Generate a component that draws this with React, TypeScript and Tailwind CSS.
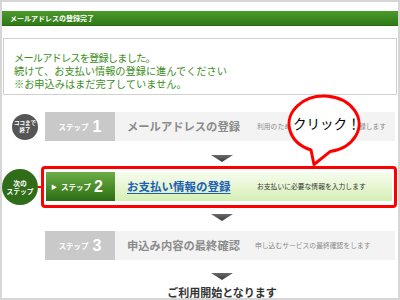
import React from "react";

const Arrow = ({ mt }: { mt: string }) => (
  <div className={`flex justify-center pl-[45px] pr-[1px] ${mt}`}>
    <svg width="22" height="7" viewBox="0 0 22 7">
      <defs>
        <linearGradient id="ag" x1="0" y1="0" x2="0" y2="1">
          <stop offset="0" stopColor="#6a6a6a" />
          <stop offset="1" stopColor="#3c3c3c" />
        </linearGradient>
      </defs>
      <polygon points="0,0 22,0 11,7" fill="url(#ag)" />
    </svg>
  </div>
);

const GrayStep = ({ n, title, desc, descLeft }: { n: string; title: string; desc: string; descLeft: string }) => (
  <div className="flex h-[29px] flex-1">
    <div className="w-[70px] h-full bg-[#c9c9c9] flex items-center justify-center gap-[4px] text-white font-bold">
      <span className="text-[7.5px] leading-none">ステップ</span>
      <span className="text-[16px] leading-none font-['Liberation_Sans',sans-serif] font-bold">{n}</span>
    </div>
    <div className="flex-1 h-full bg-[#f3f3f3] flex items-center pl-[12px]">
      <span className={`${descLeft} shrink-0 text-[11.3px] font-bold text-[#8c8c8c] whitespace-nowrap`}>{title}</span>
      <span className="text-[6.8px] text-[#8a8a8a] whitespace-nowrap">{desc}</span>
    </div>
  </div>
);

export default function App() {
  return (
    <div className="relative w-[400px] h-[300px] overflow-hidden bg-white border-2 border-[#d6d6d6] font-['Noto_Sans_CJK_JP','Noto_Sans_CJK_SC',sans-serif]">
      {/* header */}
      <div className="mt-[9px] h-[15px] bg-gradient-to-b from-[#4c9a2c] to-[#2f7a15] border-b border-[#286a10] flex items-center pl-[8px]">
        <span className="text-[7px] font-bold text-white leading-none">メールアドレスの登録完了</span>
      </div>
      {/* message */}
      <div className="mt-[12px] ml-[1px] mr-[1px] h-[57px] border border-[#d0d0d0] pt-[12px] pl-[10px] text-[10.2px] leading-[13px] text-[#3c8e1c] whitespace-nowrap">
        <div className="tracking-[-0.8px]">メールアドレスを登録しました。</div>
        <div>続けて、お支払い情報の登録に進んでください</div>
        <div>※お申込みはまだ完了していません。</div>
      </div>

      {/* step 1 */}
      <div className="mt-[17px] flex items-center pr-[3px]">
        <div className="ml-[10px] mr-[7px] w-[26px] h-[26px] rounded-full bg-[#555555] flex flex-col items-center justify-center text-white font-bold text-[5.5px] leading-[6.5px]">
          <span>ココまで</span>
          <span>終了</span>
        </div>
        <GrayStep n="1" title="メールアドレスの登録" desc="利用のためのメールアドレスを登録します" descLeft="w-[130px]" />
      </div>

      <Arrow mt="mt-[14px]" />

      {/* step 2 */}
      <div className="mt-[4px] flex items-center pr-[1px]">
        <div className="w-[36px] h-[36px] rounded-full bg-[#2f6d18] flex flex-col items-center justify-center text-white font-bold text-[6.8px] leading-[8.5px]">
          <span>次の</span>
          <span>ステップ</span>
        </div>
        <div className="w-[3px] h-[2px] bg-[#ff0000]" />
        <div className="flex-1 h-[42px] border-[3px] border-[#ff0000] rounded-[4px] pt-[3px] pl-[2px] pr-[2px]">
          <div className="flex h-[29px]">
            <div className="w-[69px] h-full bg-gradient-to-b from-[#6cae48] via-[#4b8f2a] to-[#2c6c14] flex items-center pl-[5px] text-white font-bold">
              <span className="text-[6px] leading-none mr-[4px]">▶</span>
              <span className="text-[7.5px] leading-none mr-[3px]">ステップ</span>
              <span className="text-[16px] leading-none font-['Liberation_Sans',sans-serif] font-bold">2</span>
            </div>
            <div className="flex-1 h-full bg-gradient-to-b from-[#f6fcee] to-[#d5efb5] flex items-center pl-[12px]">
              <span className="w-[130px] shrink-0 text-[11.5px] font-bold text-[#1f5fb5] underline underline-offset-2 whitespace-nowrap">お支払い情報の登録</span>
              <span className="text-[6.8px] text-[#333333] whitespace-nowrap">お支払いに必要な情報を入力します</span>
            </div>
          </div>
        </div>
      </div>

      <Arrow mt="mt-[6px]" />

      {/* step 3 */}
      <div className="mt-[10px] flex items-center pl-[43px] pr-[3px]">
        <GrayStep n="3" title="申込み内容の最終確認" desc="申し込むサービスの最終確認をします" descLeft="w-[128px]" />
      </div>

      <Arrow mt="mt-[13px]" />

      <div className="mt-[5px] flex justify-center pl-[45px] pr-[1px]">
        <span className="text-[11px] font-bold text-[#333333] leading-[14px]">ご利用開始となります</span>
      </div>

      {/* speech bubble */}
      <div className="absolute left-[283px] top-[88px] w-[80px] h-[80px]">
        <svg width="80" height="80" viewBox="283 88 80 80" className="absolute left-0 top-0">
          <path
            d="M 328 149.6 L 312 162.5 L 309 148 A 35 28 0 1 1 328 149.6 Z"
            fill="#ffffff"
            stroke="#ff0000"
            strokeWidth="3"
            strokeLinejoin="round"
          />
        </svg>
        <div className="absolute left-[8px] top-[27px] text-[13.5px] leading-none text-black whitespace-nowrap">クリック！</div>
      </div>
    </div>
  );
}
